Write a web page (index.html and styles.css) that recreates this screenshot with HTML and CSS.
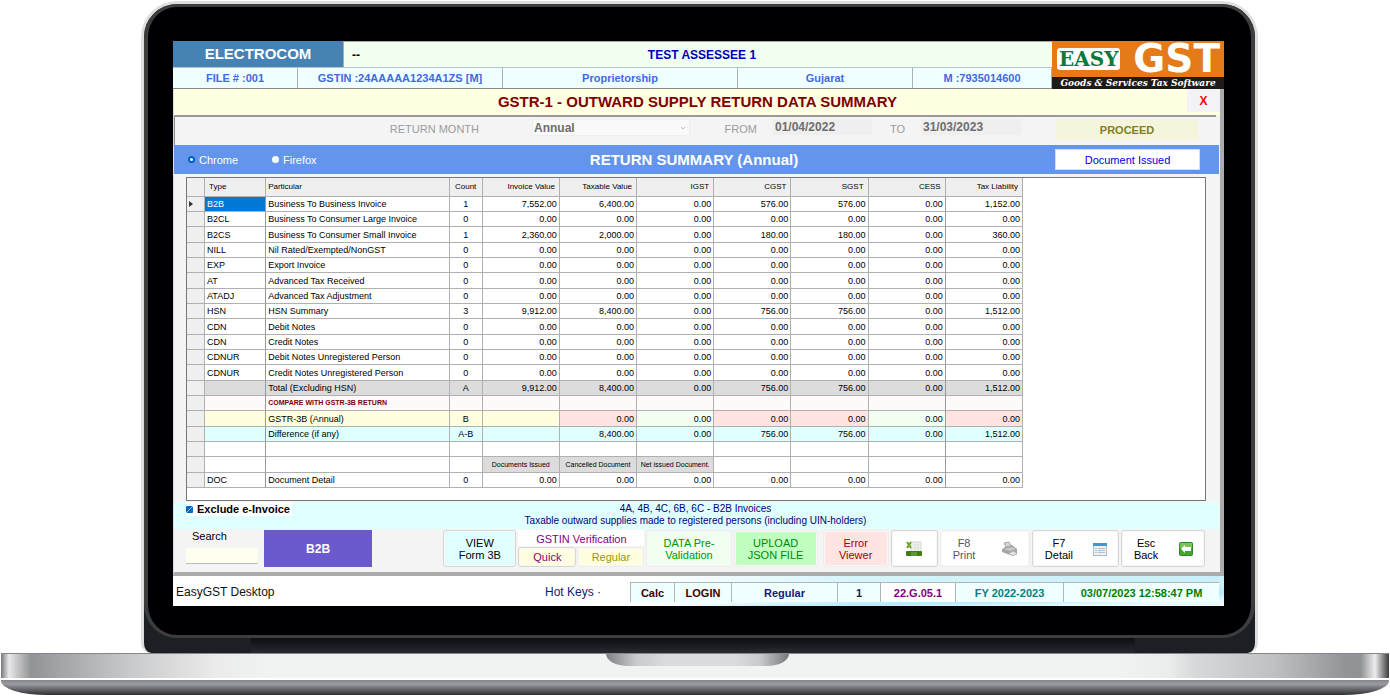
FILE: index.html
```html
<!DOCTYPE html>
<html lang="en">
<head>
<meta charset="utf-8">
<title>EasyGST Desktop</title>
<link rel="stylesheet" href="styles.css">
</head>
<body>
<div class="laptop">
<div class="lid">
<div class="bezel">
<main class="screen">
  <header class="head">
    <div class="head-info">
      <div class="head-top">
        <div class="company">ELECTROCOM</div>
        <div class="assessee"><span>--</span><span>TEST ASSESSEE 1</span></div>
      </div>
      <div class="head-meta">
        <div>FILE # :001</div><div>GSTIN :24AAAAA1234A1ZS [M]</div><div>Proprietorship</div><div>Gujarat</div><div>M :7935014600</div>
      </div>
    </div>
    <div class="logo">
      <div class="logo-top"><span class="logo-easy">EASY</span><span class="logo-gst">GST</span></div>
      <div class="logo-tag">Goods &amp; Services Tax Software</div>
    </div>
  </header>

  <section class="panel">
    <div class="title"><h1>GSTR-1 - OUTWARD SUPPLY RETURN DATA SUMMARY</h1><button class="close" type="button">X</button></div>

    <form class="filter">
      <label for="month">RETURN MONTH</label>
      <div class="combo"><select id="month" disabled><option>Annual</option></select><svg viewBox="0 0 8 6" aria-hidden="true"><path d="M2 2l2 2 2-2" fill="none" stroke="#bbb"/></svg></div>
      <label for="from">FROM</label>
      <input id="from" type="text" value="01/04/2022" disabled>
      <label for="to">TO</label>
      <input id="to" type="text" value="31/03/2023" disabled>
      <button class="proceed" type="button">PROCEED</button>
    </form>

    <div class="summary">
      <div class="browsers">
        <label><input type="radio" name="browser" checked>Chrome</label>
        <label><input type="radio" name="browser">Firefox</label>
      </div>
      <h2>RETURN SUMMARY (Annual)</h2>
      <button class="issued" type="button">Document Issued</button>
    </div>

    <div class="grid-box">
      <table>
        <colgroup><col class="c-mark"><col class="c-type"><col class="c-part"><col class="c-count"><col class="c-num" span="7"></colgroup>
        <thead><tr><th></th><th>Type</th><th>Particular</th><th>Count</th><th>Invoice Value</th><th>Taxable Value</th><th>IGST</th><th>CGST</th><th>SGST</th><th>CESS</th><th>Tax Liability</th></tr></thead>
        <tbody>
          <tr><th><svg class="arrow" viewBox="0 0 4 6" aria-hidden="true"><path d="M0 0l4 3-4 3z" fill="#333"/></svg></th><td class="picked">B2B</td><td>Business To Business Invoice</td><td>1</td><td>7,552.00</td><td>6,400.00</td><td>0.00</td><td>576.00</td><td>576.00</td><td>0.00</td><td>1,152.00</td></tr>
          <tr><th></th><td>B2CL</td><td>Business To Consumer Large Invoice</td><td>0</td><td>0.00</td><td>0.00</td><td>0.00</td><td>0.00</td><td>0.00</td><td>0.00</td><td>0.00</td></tr>
          <tr><th></th><td>B2CS</td><td>Business To Consumer Small Invoice</td><td>1</td><td>2,360.00</td><td>2,000.00</td><td>0.00</td><td>180.00</td><td>180.00</td><td>0.00</td><td>360.00</td></tr>
          <tr><th></th><td>NILL</td><td>Nil Rated/Exempted/NonGST</td><td>0</td><td>0.00</td><td>0.00</td><td>0.00</td><td>0.00</td><td>0.00</td><td>0.00</td><td>0.00</td></tr>
          <tr><th></th><td>EXP</td><td>Export Invoice</td><td>0</td><td>0.00</td><td>0.00</td><td>0.00</td><td>0.00</td><td>0.00</td><td>0.00</td><td>0.00</td></tr>
          <tr><th></th><td>AT</td><td>Advanced Tax Received</td><td>0</td><td>0.00</td><td>0.00</td><td>0.00</td><td>0.00</td><td>0.00</td><td>0.00</td><td>0.00</td></tr>
          <tr><th></th><td>ATADJ</td><td>Advanced Tax Adjustment</td><td>0</td><td>0.00</td><td>0.00</td><td>0.00</td><td>0.00</td><td>0.00</td><td>0.00</td><td>0.00</td></tr>
          <tr><th></th><td>HSN</td><td>HSN Summary</td><td>3</td><td>9,912.00</td><td>8,400.00</td><td>0.00</td><td>756.00</td><td>756.00</td><td>0.00</td><td>1,512.00</td></tr>
          <tr><th></th><td>CDN</td><td>Debit Notes</td><td>0</td><td>0.00</td><td>0.00</td><td>0.00</td><td>0.00</td><td>0.00</td><td>0.00</td><td>0.00</td></tr>
          <tr><th></th><td>CDN</td><td>Credit Notes</td><td>0</td><td>0.00</td><td>0.00</td><td>0.00</td><td>0.00</td><td>0.00</td><td>0.00</td><td>0.00</td></tr>
          <tr><th></th><td>CDNUR</td><td>Debit Notes Unregistered Person</td><td>0</td><td>0.00</td><td>0.00</td><td>0.00</td><td>0.00</td><td>0.00</td><td>0.00</td><td>0.00</td></tr>
          <tr><th></th><td>CDNUR</td><td>Credit Notes Unregistered Person</td><td>0</td><td>0.00</td><td>0.00</td><td>0.00</td><td>0.00</td><td>0.00</td><td>0.00</td><td>0.00</td></tr>
          <tr class="total"><th></th><td></td><td>Total (Excluding HSN)</td><td>A</td><td>9,912.00</td><td>8,400.00</td><td>0.00</td><td>756.00</td><td>756.00</td><td>0.00</td><td>1,512.00</td></tr>
          <tr class="compare"><th></th><td></td><td>COMPARE WITH GSTR-3B RETURN</td><td></td><td></td><td></td><td></td><td></td><td></td><td></td><td></td></tr>
          <tr class="annual"><th></th><td></td><td>GSTR-3B (Annual)</td><td>B</td><td></td><td class="bad">0.00</td><td class="good">0.00</td><td class="bad">0.00</td><td class="bad">0.00</td><td class="good">0.00</td><td class="bad">0.00</td></tr>
          <tr class="diff"><th></th><td></td><td>Difference (if any)</td><td>A-B</td><td></td><td>8,400.00</td><td>0.00</td><td>756.00</td><td>756.00</td><td>0.00</td><td>1,512.00</td></tr>
          <tr><th></th><td></td><td></td><td></td><td></td><td></td><td></td><td></td><td></td><td></td><td></td></tr>
          <tr><th></th><td></td><td></td><td></td><td class="sub">Documents Issued</td><td class="sub">Cancelled Document</td><td class="sub">Net issued Document.</td><td></td><td></td><td></td><td></td></tr>
          <tr><th></th><td>DOC</td><td>Document Detail</td><td>0</td><td>0.00</td><td>0.00</td><td>0.00</td><td>0.00</td><td>0.00</td><td>0.00</td><td>0.00</td></tr>
        </tbody>
      </table>
    </div>

    <div class="note">
      <label class="exclude"><input type="checkbox" checked>Exclude e-Invoice</label>
      <p>4A, 4B, 4C, 6B, 6C - B2B Invoices<br>Taxable outward supplies made to registered persons (including UIN-holders)</p>
    </div>

    <div class="actions">
      <div class="search"><label for="search">Search</label><input id="search" type="text"></div>
      <button class="b2b" type="button">B2B</button>
      <span></span>
      <button class="btn view" type="button">VIEW<br>Form 3B</button>
      <div class="verify"><span>GSTIN Verification</span><button class="btn quick" type="button">Quick</button><button class="btn regular" type="button">Regular</button></div>
      <button class="btn data" type="button">DATA Pre-<br>Validation</button>
      <button class="btn upload" type="button">UPLOAD<br>JSON FILE</button>
      <button class="btn error" type="button">Error<br>Viewer</button>
      <button class="btn" type="button" aria-label="Export to Excel"><svg width="16" height="16" viewBox="0 0 16 16"><rect x="5" y="1" width="10" height="10" fill="#f1f3f0" stroke="#d5d9d3"/><path d="M5 4h10M5 7h10M9 1v10M12 1v10" stroke="#dde1da"/><path d="M1 1l4 6M5 1L1 7" stroke="#6aa51e" stroke-width="2"/><rect y="10" width="16" height="5" rx="1" fill="#3f7d14"/><path d="M5 12h6M5 14h6" stroke="#7fae5c"/></svg></button>
      <button class="btn split print" type="button"><span>F8<br>Print</span><svg width="17" height="16" viewBox="0 0 17 16"><path d="M3 2l5-1 3 5-5 2z" fill="#d4d4d4" stroke="#aaa"/><path d="M1 8l3-2 7-2 5 4v4l-7 2-8-3z" fill="#a6a6a6"/><path d="M2 8l9-2 4 2-6 2z" fill="#c6c6c6"/><path d="M8 12l5-2 3 3-5 2z" fill="#e2e2e2" stroke="#b5b5b5"/></svg></button>
      <button class="btn split" type="button"><span>F7<br>Detail</span><svg width="14" height="14" viewBox="0 0 14 14"><rect x=".5" y="1.500" width="13" height="12" fill="#eef0f1" stroke="#a9bccb"/><rect y="1" width="14" height="3" fill="#3d98d1"/><path d="M2 6.500h2M2 8.500h2M2 10.500h2M5 6.500h7M5 8.500h7M5 10.500h7" stroke="#b9bec1"/></svg></button>
      <button class="btn split" type="button"><span>Esc<br>Back</span><svg width="14" height="14" viewBox="0 0 14 14"><rect x=".5" y=".5" width="13" height="13" rx="1" fill="#43a52b" stroke="#2f8a1f"/><path d="M1 1h12v5H1z" fill="#7cc35c"/><path d="M2 7l4-4v2h6v4H6v2z" fill="#fff"/></svg></button>
    </div>
  </section>

  <footer class="status">
    <div class="app"><span>EasyGST Desktop</span><span>Hot Keys ·</span></div>
    <div class="dark">Calc</div><div class="dark">LOGIN</div><div>Regular</div><div>1</div><div class="version">22.G.05.1</div><div class="year">FY 2022-2023</div><div class="clock">03/07/2023 12:58:47 PM</div>
  </footer>
</main>
</div>
<div class="hinge"></div>
</div>
<div class="base"><div class="notch"></div></div>
<div class="foot"></div>
</div>
</body>
</html>
```
FILE: styles.css
```css
* { box-sizing: border-box; }
body { margin: 0; background: #fff; font: 12px/12px "Liberation Sans", Arial, sans-serif; color: #000; }
h1, h2, p { margin: 0; }
button, input, select { font: inherit; color: inherit; margin: 0; padding: 0; border: 0; }
svg { display: block; }

/* Laptop shell */
.laptop { padding: 1px 1px 0; }
.lid { margin: 0 131px 0 140px; border: 3px solid #dedede; border-bottom: 0; border-radius: 36px 36px 10px 10px; background: #1c1f24; }
.bezel { padding: 34px 27px 29px 25px; background: #000004; border: 4px solid #3d3d3d; border-top-width: 3px; border-bottom-width: 3px; border-radius: 33px; }
.hinge { height: 15px; margin: 0 120px 0 107px; background: linear-gradient(#0d0e11, #282a31); }
.base { height: 27px; padding-left: 5px; border-top: 1px solid #85868b; border-bottom: 2px solid #fff; background: linear-gradient(90deg, #77787b 0, #e9e9ea 8px, #d0d0d1 14px, #929397 30px, #a9aaac 70px, #c9cacb 130px, #ebebec 215px, #f1f3f2 270px, #f1f3f2 calc(100% - 270px), #ebecec calc(100% - 220px), #d8d9da calc(100% - 195px), #bfc0c1 calc(100% - 115px), #929397 calc(100% - 42px), #929397 calc(100% - 28px), #ededee calc(100% - 14px), #3c3c3e 100%); }
.notch { width: 183px; height: 12px; margin: 0 auto; border-radius: 0 0 22px 22px / 0 0 12px 12px; background: linear-gradient(90deg, #808186, #c9cacc 30px, #dadbdd 60px, #dadbdd 130px, #c9cacc 154px, #77787d); }
.foot { height: 15px; border-radius: 0 0 46px 46px / 0 0 14px 14px; background: linear-gradient(#85868b, #9b9ca1 4px, #696a6e 9px, #303033); }

/* Header */
.screen { background: #f4f4f4; }
.head { display: grid; grid-template-columns: 1fr 172px; }
.head-info { display: flex; flex-direction: column; border-bottom: 1px solid #888; }
.head-top { display: grid; grid-template-columns: 170px 1fr; height: 27px; border-bottom: 1px solid #b9c4c4; font-weight: bold; }
.company { display: grid; place-items: center; background: #4682b4; color: #fff; font-size: 15px; }
.assessee { display: grid; grid-template-columns: 1fr auto 1fr; align-items: center; padding-left: 8px; background: #f0fff0; border-left: 1px solid #aaa; border-top: 1px solid #aaa; }
.assessee span:last-child { color: #0000b4; }
.head-meta { display: grid; grid-template-columns: 125fr 205fr 235fr 175fr 139fr; flex: 1; background: #f0ffff; color: #4169e1; font-weight: bold; font-size: 11px; }
.head-meta div { display: grid; place-items: center; border-right: 1px solid #a9b0b0; }
.logo { display: flex; flex-direction: column; background: #e57a18; color: #fff; }
.logo-top { display: flex; align-items: center; justify-content: space-between; height: 36px; padding: 0 4px 0 5px; }
.logo-easy { padding: 0 2px; border-radius: 3px; background: #fff; color: #087a3b; font: bold 20px/22px "DejaVu Serif", serif; }
.logo-gst { font: bold 39px/34px "DejaVu Sans", sans-serif; }
.logo-tag { padding: 0 4px; height: 12px; background: #1e1a18; font: italic bold 9px/12px "DejaVu Serif", serif; white-space: nowrap; text-align: center; }

/* Panel */
.panel { border-left: 1px solid #ddd; border-right: 4px solid #ababab; border-bottom: 4px solid #ababab; }
.title { display: grid; grid-template-columns: 1fr 33px; height: 26px; background: #ffffe1; color: #800000; }
.title h1 { padding-left: 34px; font-size: 15px; line-height: 26px; text-align: center; }
.close { margin-bottom: 3px; background: #f3f3f7; color: #f00; font-weight: bold; }
.filter { display: grid; grid-template-columns: 357fr 158fr 83fr 99fr 49fr 100fr 177fr 18fr; height: 30px; margin-right: 4px; padding-top: 2px; border-top: 2px solid #999; border-left: 1px solid #888; background: #f4f4f4; color: #9c9c9c; align-items: start; font-size: 11px; }
.filter label { text-align: right; padding: 4px 16px 0 0; }
.filter label:first-child { padding-right: 53px; }
.filter input { height: 16px; padding-left: 2px; background: #efefef; color: #6d6d6d; font-weight: bold; font-size: 12px; width: 100%; }
.combo { display: grid; grid-template-columns: 1fr 10px; align-items: center; height: 17px; border: 1px solid #eee; background: #f9f9f9; }
.combo select { appearance: none; padding-left: 1px; background: transparent; color: #6d6d6d; opacity: 1; font-weight: bold; font-size: 12px; }
.combo svg { width: 8px; height: 6px; }
.proceed { margin-left: 35px; height: 21px; background: #f5f5dc; color: #808020; font-weight: bold; }
.summary { display: grid; grid-template-columns: 1fr auto 1fr; align-items: center; height: 29px; padding: 0 19px 0 14px; margin-right: 1px; background: #6495ed; color: #fff; }
.summary h2 { font-size: 15px; line-height: 18px; }
.browsers { display: grid; grid-template-columns: 84px 1fr; font-size: 11px; }
.browsers label { display: flex; align-items: center; gap: 4px; }
.browsers input { appearance: none; width: 7px; height: 7px; border-radius: 50%; background: #fff; }
.browsers input:checked { border: 2px solid #005fb8; }
.issued { justify-self: end; width: 145px; height: 21px; border: 1px solid #d6deee; background: #fff; color: #0000e0; font-size: 11px; }

/* Data grid */
.grid-box { margin: 3px 14px 1px 12px; height: 324px; border: 1px solid #777; background: #fff; overflow: hidden; }
table { width: 836px; table-layout: fixed; border-collapse: separate; border-spacing: 0; font-size: 9px; line-height: 12px; }
.c-mark { width: 18px; }
.c-type { width: 61px; }
.c-part { width: 184px; }
.c-count { width: 33px; }
.c-num { width: 77px; }
.c-part { width: 183px; }
th, td { height: 15px; padding: 0 2px; border-right: 1px solid #b0b0b0; border-bottom: 1px solid #b0b0b0; font-weight: normal; text-align: right; white-space: nowrap; overflow: hidden; }
tbody tr:nth-child(3n) > * { height: 16px; }
th { background: #efefef; }
thead th { height: 19px; padding: 0 4px; font-size: 8px; }
thead th:nth-child(3) { padding-left: 2px; }
th:nth-child(2), td:nth-child(2), th:nth-child(3), td:nth-child(3) { text-align: left; }
td:nth-child(2), td:nth-child(10) { border-right-color: #999; }
td:nth-child(4), th:nth-child(4) { text-align: center; }
.arrow { width: 4px; height: 6px; }
.picked { background: #0078d7; color: #fff; }
.total td { background: #dcdcdc; }
.compare td { background: #fffafa; color: #800000; font-weight: bold; font-size: 7px; }
.annual td { background: #ffffe0; }
.annual .bad { background: #ffe4e1; }
.annual .good { background: #f0fff0; }
.diff td { background: #e0ffff; }
tbody .sub { background: #dcdcdc; font-size: 7px; text-align: center; }

/* Note and actions */
.note { display: grid; grid-template-columns: 1fr auto 1fr; align-items: start; height: 27px; padding: 0 14px 0 12px; margin-right: 1px; background: #e0ffff; color: #000080; text-align: center; }
.note p { padding-top: 1px; font-size: 10px; line-height: 12px; }
.exclude { display: flex; align-items: center; gap: 4px; justify-self: start; height: 14px; padding-right: 2px; background: #fff; color: #000; font-weight: bold; font-size: 11px; }
.exclude input { appearance: none; width: 7px; height: 7px; border-radius: 1px; background: linear-gradient(135deg, #0067c0 45%, #9cc8ee 45%, #9cc8ee 55%, #0067c0 55%); }
.actions { display: grid; grid-template-columns: 76fr 108fr 67fr 73fr 126fr 85fr 87fr 66fr 47fr 90fr 87fr 84fr; gap: 2px; height: 43px; padding: 1px 15px 5px 12px; }
.search { display: flex; flex-direction: column; gap: 6px; padding-right: 4px; font-size: 11px; }
.search label { padding-left: 6px; }
.search input { width: 100%; height: 16px; background: #fffff0; border-bottom: 1px solid #bbb; }
.b2b { background: #6a5acd; color: #fff; font-weight: bold; }
.btn { display: grid; place-items: center; place-content: center; border: 1px solid #d6d6d6; border-radius: 3px; background: #fff; font-size: 11px; line-height: 12px; box-shadow: inset 0 0 0 1px #f8f8f8; }
.view { background: #e0ffff; }
.verify { display: grid; grid-template-columns: 58fr 67fr; grid-template-rows: 16px 1fr; gap: 1px; color: #800080; text-align: center; line-height: 18px; font-size: 11px; }
.verify > span { grid-column: 1 / 3; background: #fff; }
.quick, .regular { background: #ffffe0; }
.regular { color: #999900; border-color: #eee; }
.data { background: #f0fff0; color: #009600; border-color: #eee; }
.upload { background: #c1ffc1; color: #008800; border-color: #eee; margin-right: 3px; }
.error { background: #ffe4e1; color: #a00000; border-color: #eee; }
.split { grid-template-columns: auto auto; justify-content: space-between; padding: 0 11px 0 12px; }
.print { color: #555; border-color: #eee; }

/* Status bar */
.status { display: grid; grid-template-columns: 457fr 44fr 57fr 106fr 43fr 75fr 108fr 156fr; height: 30px; padding: 6px 5px 4px 0; background: linear-gradient(178deg, #fff0 70%, #b8eafa 80%, #e8fbfd 92%), linear-gradient(90deg, #fff 45%, #d6f5fb 65%, #c9eff8); color: #191970; font-weight: bold; font-size: 11px; }
.status > div { display: grid; place-items: center; border-left: 1px solid #aab7bb; border-top: 1px solid #aab7bb; background: #f0ffff; }
.status .app { grid-template-columns: auto auto; justify-content: space-between; border: 0; background: none; padding: 0 29px 0 3px; font-weight: normal; font-size: 12px; }
.app span:first-child { color: #111; }
.status .dark { color: #400000; }
.status .version { background: #fff; color: #800080; }
.status .year { color: #008080; }
.status .clock { color: #008000; }
```
